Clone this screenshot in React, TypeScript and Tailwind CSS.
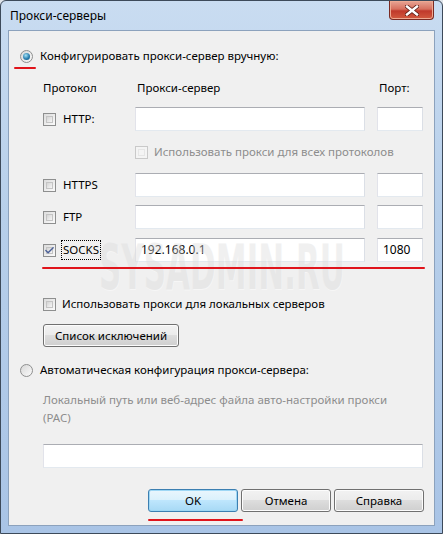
import { Check } from 'lucide-react'

const font = { fontFamily: '"Noto Sans", "Open Sans", sans-serif' }

function Checkbox({ checked = false, disabled = false }: { checked?: boolean; disabled?: boolean }) {
  return (
    <span
      className={
        'relative inline-flex h-[13px] w-[13px] shrink-0 items-center justify-center border ' +
        (disabled ? 'border-[#c9c9c9] bg-[#f4f4f4]' : 'border-[#8e8f8f] bg-gradient-to-br from-[#dcdcdc] to-[#fbfbfb]')
      }
    >
      <span
        className={
          'absolute inset-[2px] border ' +
          (disabled ? 'border-[#e6e6e6] bg-[#f4f4f4]' : 'border-[#c4c4c4] bg-gradient-to-br from-[#d4d4d4] to-[#f6f6f6]')
        }
      />
      {checked && <Check size={11} strokeWidth={3} className="relative text-[#4a5f97]" />}
    </span>
  )
}

function Radio({ checked = false }: { checked?: boolean }) {
  return (
    <span className="inline-flex h-[13px] w-[13px] shrink-0 items-center justify-center rounded-full border border-[#8e8f8f] bg-gradient-to-br from-[#d8d8d8] to-[#fafafa]">
      {checked && (
        <span className="h-[7px] w-[7px] rounded-full bg-[radial-gradient(circle_at_40%_35%,#a6e3f5,#2a7fb0_55%,#0d4f78)]" />
      )}
    </span>
  )
}

function Field({ w, value = '' }: { w: string; value?: string }) {
  return (
    <div className={'flex h-[24px] items-center border border-[#abadb3] border-b-[#e3e9ef] border-l-[#e2e3ea] border-r-[#dbdfe6] bg-white px-[5px] text-[12px] text-black ' + w}>
      {value}
    </div>
  )
}

function Button({ label, w, primary = false }: { label: string; w: string; primary?: boolean }) {
  return (
    <div
      className={
        'flex h-[23px] items-center justify-center rounded-[3px] border text-black ' +
        w +
        (primary
          ? ' border-[#3c7fb1] bg-[linear-gradient(#eaf6fd_0%,#d9f0fc_50%,#bee6fd_50%,#a7d9f5_100%)] shadow-[inset_0_0_0_1px_#9ed7f5]'
          : ' border-[#707070] bg-[linear-gradient(#f2f2f2_0%,#ebebeb_50%,#dddddd_50%,#cfcfcf_100%)] shadow-[inset_0_0_0_1px_#fcfcfc]')
      }
    >
      {label}
    </div>
  )
}

function ProtoRow({ name, checked = false, focused = false, host = '', port = '' }: { name: string; checked?: boolean; focused?: boolean; host?: string; port?: string }) {
  return (
    <div className="flex h-[24px] items-center">
      <div className="flex w-[92px] items-center gap-[6px]">
        <Checkbox checked={checked} />
        <span className={'px-[1px] leading-[18px] ' + (focused ? 'outline outline-1 outline-dotted outline-black' : '')}>{name}</span>
      </div>
      <Field w="w-[230px]" value={host} />
      <div className="w-[12px]" />
      <Field w="w-[46px]" value={port} />
    </div>
  )
}

export default function App() {
  return (
    <div className="h-[534px] w-[443px] overflow-hidden bg-[#dfe4ea] text-[11.5px] text-black" style={font}>
      <div className="flex h-full flex-col rounded-t-[6px] border border-[#3d4a5a] bg-[linear-gradient(#c9dcf1,#b7cfea_40%,#a9c4e6)]">
        <div className="relative flex h-[29px] shrink-0 items-center pl-[9px] text-[12px] text-black">
          Прокси-серверы
          <div className="absolute right-[8px] top-[0px] flex h-[19px] w-[45px] items-center justify-center rounded-b-[4px] border border-t-0 border-[#7a2a22] bg-[linear-gradient(#e8a595,#d7705e_45%,#c0392b_55%,#d25a3f)] shadow-[inset_0_0_0_1px_#eea992]">
            <svg width="14" height="11" viewBox="0 0 14 11">
              <path d="M2 1.5 L12 9.5 M12 1.5 L2 9.5" stroke="#5a1c14" strokeWidth="4" strokeLinecap="square" />
              <path d="M2 1.5 L12 9.5 M12 1.5 L2 9.5" stroke="#ffffff" strokeWidth="2.4" strokeLinecap="square" />
            </svg>
          </div>
        </div>
        <div className="relative mx-[7px] mb-[7px] flex flex-1 flex-col overflow-hidden border border-[#8ca2bd] bg-[#f0f0f0] pl-[11px]">
          <div className="relative mt-[15px] flex h-[20px] items-center gap-[7px]">
            <Radio checked />
            <span>Конфигурировать прокси-сервер вручную:</span>
          </div>

          <div className="relative ml-[23px] flex flex-col">
            <div className="mt-[12px] flex h-[20px] items-center">
              <span className="w-[92px]">Протокол</span>
              <span className="w-[242px] pl-[2px]">Прокси-сервер</span>
              <span className="pl-[2px]">Порт:</span>
            </div>
            <div className="mt-[9px]">
              <ProtoRow name="HTTP:" />
            </div>
            <div className="mt-[11px] flex h-[20px] items-center gap-[6px] pl-[92px] text-[#8d8d8d]">
              <Checkbox disabled />
              <span>Использовать прокси для всех протоколов</span>
            </div>
            <div className="mt-[11px]">
              <ProtoRow name="HTTPS" />
            </div>
            <div className="mt-[8px]">
              <ProtoRow name="FTP" />
            </div>
            <div className="mt-[9px]">
              <ProtoRow name="SOCKS" checked focused host="192.168.0.1" port="1080" />
            </div>
            <div className="mt-[32px] flex h-[20px] items-center gap-[6px]">
              <Checkbox />
              <span>Использовать прокси для локальных серверов</span>
            </div>
            <div className="mt-[10px]">
              <Button label="Список исключений" w="w-[136px]" />
            </div>
          </div>

          <div className="relative mt-[13px] flex h-[20px] items-center gap-[7px]">
            <Radio />
            <span>Автоматическая конфигурация прокси-сервера:</span>
          </div>
          <div className="relative ml-[23px] mt-[11px] w-[360px] leading-[18px] text-[#8d8d8d]">
            Локальный путь или веб-адрес файла авто-настройки прокси (PAC)
          </div>
          <div className="relative ml-[23px] mt-[17px]">
            <Field w="w-[380px]" />
          </div>
          <div className="relative mt-[21px] flex gap-[3px] pl-[128px]">
            <Button label="OK" w="w-[90px]" primary />
            <Button label="Отмена" w="w-[90px]" />
            <Button label="Справка" w="w-[90px]" />
          </div>

          {/* watermark */}
          <div
            className="pointer-events-none absolute left-[90px] top-[206px] origin-left scale-x-[0.5] select-none text-[62px] font-black leading-none text-[#dcdcdc] opacity-40 [text-shadow:1px_1px_0_#ffffff]"
            style={{ fontFamily: '"DejaVu Sans", "Liberation Sans", sans-serif' }}
          >
            SYSADMIN.RU
          </div>

          {/* red annotation lines */}
          <div className="absolute left-[5px] top-[36px] h-[2px] w-[22px] rounded-full bg-[#e0141b]" />
          <div className="absolute left-[33px] top-[236px] h-[2px] w-[383px] rounded-full bg-[#e0141b]" />
          <div className="absolute left-[139px] top-[488px] h-[2px] w-[95px] rounded-full bg-[#e0141b]" />
        </div>
      </div>
    </div>
  )
}
